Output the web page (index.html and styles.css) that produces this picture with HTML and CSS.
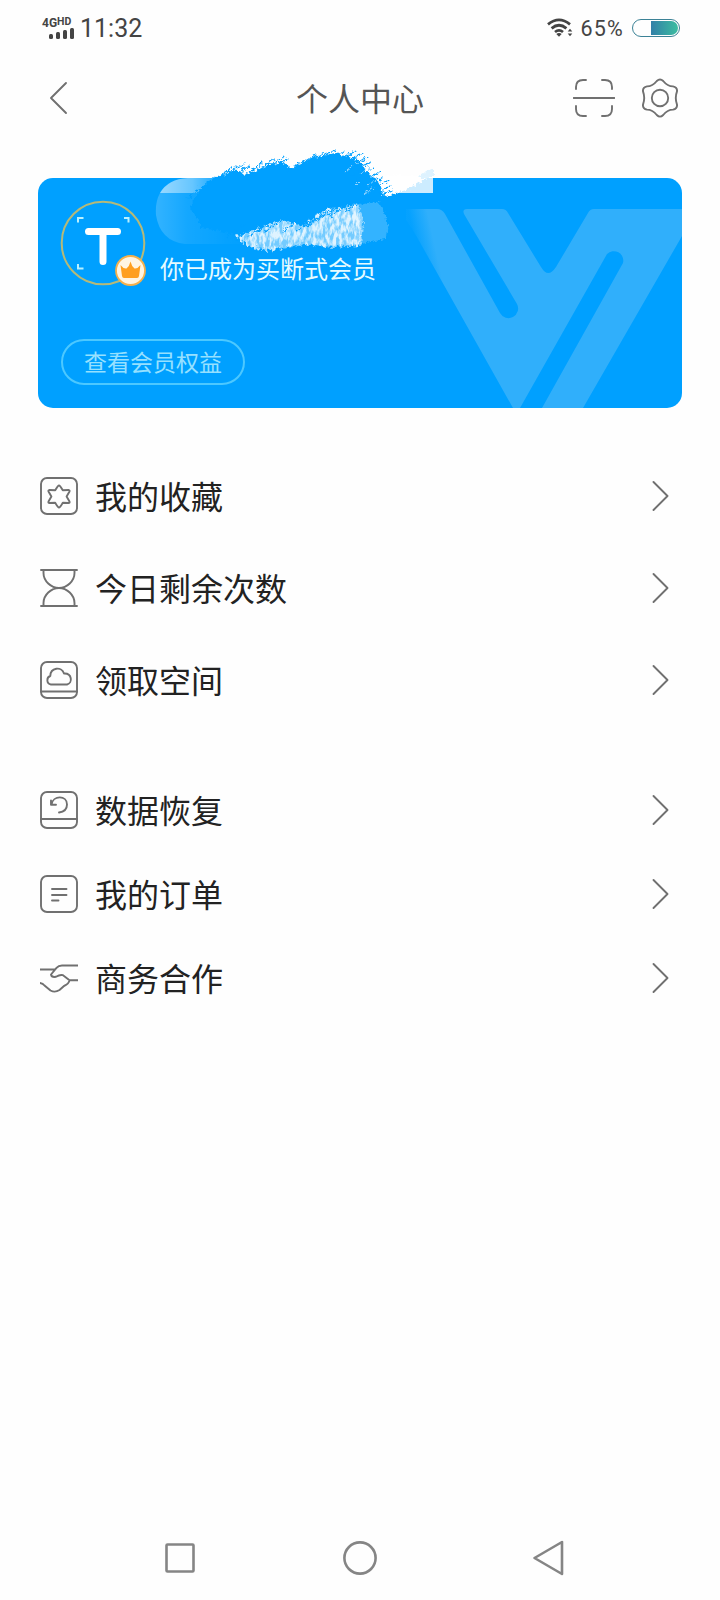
FILE: index.html
```
<!DOCTYPE html>
<html lang="zh-CN">
<head>
    <meta charset="UTF-8">
    <meta name="viewport" content="width=device-width, initial-scale=1.0">
    <title>个人中心</title>
    <link rel="stylesheet" href="styles.css">
</head>
<body>
    <div class="status-bar">
        <div class="status-left">
            <div class="signal">
                <div class="network">4G<span>HD</span></div>
                <div class="bars"><i class="b1"></i><i class="b2"></i><i class="b3"></i><i class="b4"></i></div>
            </div>
            <span class="time">11:32</span>
        </div>
        <div class="status-right">
            <svg class="wifi" width="27" height="20" viewBox="0 0 27 20">
                <g fill="none" stroke="#444" stroke-width="2.8">
                    <path d="M1 6.3Q12 -2.6 23 6.3"/>
                    <path d="M4.6 10.3Q12 4.2 19.4 10.3"/>
                    <path d="M8 14Q12 10.8 16 14"/>
                </g>
                <path d="M9.3 16Q12 14.2 14.7 16L12 18.8Z" fill="#444"/>
                <path d="M20.7 13.6L23 10.8L25.3 13.6ZM20.7 15.4L23 18.2L25.3 15.4Z" fill="#444"/>
            </svg>
            <span class="percent">65%</span>
            <div class="battery"><div class="battery-level"></div></div>
        </div>
    </div>

    <header class="header">
        <div class="header-side">
            <svg width="20" height="34" viewBox="0 0 20 34"><path d="M17 2L2 17L17 32" class="line"/></svg>
        </div>
        <h1>个人中心</h1>
        <div class="header-side right">
            <svg width="42" height="40" viewBox="0 0 42 40">
                <path d="M3 11V9Q3 2 10 2H13M29 2H32Q39 2 39 9V11M3 28V31Q3 38 10 38H13M29 38H32Q39 38 39 31V28M0.5 20H41.5" class="line"/>
            </svg>
            <svg width="38" height="40" viewBox="0 0 38 40">
                <path d="M15.8 3Q19 -0.2 22.2 3C25 6.5 27.5 8.4 32 8.4Q36.5 9.3 36 13.4C34.3 18 34.3 22 36 26.6Q36.5 30.7 32 31.6C27.5 31.6 25 33.5 22.2 37Q19 40.2 15.8 37C13 33.5 10.5 31.6 6 31.6Q1.5 30.7 2 26.6C3.7 22 3.7 18 2 13.4Q1.5 9.3 6 8.4C10.5 8.4 13 6.5 15.8 3Z" class="line"/>
                <circle cx="19" cy="20" r="8.2" class="line"/>
            </svg>
        </div>
    </header>

    <section class="card">
        <svg class="card-logo" width="644" height="230" viewBox="0 0 644 230">
            <defs>
                <linearGradient id="logoFade" gradientUnits="userSpaceOnUse" x1="374" y1="50" x2="392" y2="46">
                    <stop offset="0" stop-color="#30affb" stop-opacity="0.1"/>
                    <stop offset="1" stop-color="#30affb"/>
                </linearGradient>
            </defs>
            <path fill="url(#logoFade)" d="M368 31H399Q404 31 407 36L462 135A9.5 9.5 0 0 0 479 126L426 36Q424 31 429 31H464Q468 31 470 35L503 89Q510 101 518 89L550 35Q552 31 556 31H644V58L545 230H504L585 85A9.5 9.5 0 0 0 569 76L482 230H475L384 68Q374 50 368 42Z"/>
        </svg>

        <div class="member">
            <svg class="avatar" width="86" height="86" viewBox="0 0 86 86">
                <circle cx="43" cy="43" r="41.3" fill="none" stroke="#b5b978" stroke-width="2"/>
                <path d="M18 22.5V18H23.5M64 18H68.5V22.5M18 64V68.5H23.5" fill="none" stroke="#b9f0ff" stroke-width="2"/>
                <path d="M28.5 31.5H57.5M43 31.5V61.5" fill="none" stroke="#fff" stroke-width="7" stroke-linecap="round"/>
                <circle cx="70.5" cy="70.5" r="14.5" fill="#fff5e3" stroke="#f5b04c" stroke-width="1.8"/>
                <path d="M60.5 65Q63.5 69 66.5 68.5Q69.5 66 70.5 61.5Q71.500 66 74.500 68.500Q77.500 69 80.500 65L79 76Q78.700 78 77 78H64Q62.300 78 62 76Z" fill="#ff9f1f"/>
            </svg>
            <p class="member-text">你已成为买断式会员</p>
        </div>
        <a class="benefits">查看会员权益</a>

        <svg class="brush" width="320" height="120" viewBox="0 0 320 120">
            <defs>
                <filter id="rough" x="-10%" y="-20%" width="120%" height="140%">
                    <feTurbulence type="fractalNoise" baseFrequency="0.3" numOctaves="3" seed="4"/>
                    <feDisplacementMap in="SourceGraphic" scale="7" xChannelSelector="R" yChannelSelector="G"/>
                    <feGaussianBlur stdDeviation="0.5"/>
                </filter>
                <filter id="chalk" x="-10%" y="-20%" width="120%" height="140%">
                    <feTurbulence type="fractalNoise" baseFrequency="0.3 0.12" numOctaves="3" seed="9" result="n"/>
                    <feColorMatrix in="n" type="matrix" values="0 0 0 0 1  0 0 0 0 1  0 0 0 0 1  3.5 0 0 0 -1.2" result="holes"/>
                    <feDisplacementMap in="SourceGraphic" in2="n" scale="12" xChannelSelector="R" yChannelSelector="G" result="d"/>
                    <feComposite in="d" in2="holes" operator="in"/>
                    <feGaussianBlur stdDeviation="0.5"/>
                </filter>
                <linearGradient id="leftWhite" x1="0" x2="1" y1="0" y2="0">
                    <stop offset="0" stop-color="#fff" stop-opacity="0.6"/>
                    <stop offset="0.5" stop-color="#fff" stop-opacity="0.4"/>
                    <stop offset="1" stop-color="#fff" stop-opacity="0"/>
                </linearGradient>
                <linearGradient id="pillFade" x1="0" x2="1" y1="0" y2="0">
                    <stop offset="0" stop-color="#fff" stop-opacity="0.2"/>
                    <stop offset="0.3" stop-color="#fff" stop-opacity="0.08"/>
                    <stop offset="0.7" stop-color="#fff" stop-opacity="0.02"/>
                    <stop offset="1" stop-color="#fff" stop-opacity="0"/>
                </linearGradient>
            </defs>
            <path d="M20 53Q28 39 48 38H85V53Z" fill="url(#leftWhite)"/>
            <path d="M20 53H120V104H45Q20 101 16 75Q15 62 20 53Z" fill="url(#pillFade)"/>
            <path d="M234 36L293 36V53H245Z" fill="#fff" opacity="0.8"/>
            <path d="M238 36L291 36L266 50L244 57Z" fill="#fff" filter="url(#rough)"/>
            <path d="M276 38L293 28V38Z" fill="#bfe8ff" opacity="0.5" filter="url(#rough)"/>
            <path d="M210 66L238 62Q252 78 245 99L220 104Z" fill="#fff" opacity="0.2" filter="url(#rough)"/>
            <path d="M96 96L140 80L163 86L184 70L218 65L223 82L221 105L192 107L165 104L128 110L112 107Z" fill="#fff" opacity="0.45" filter="url(#rough)"/>
            <path d="M96 96L140 80L163 86L184 70L218 65L223 82L221 105L192 107L165 104L128 110L112 107Z" fill="#f2fbff" opacity="0.85" filter="url(#chalk)"/>
            <g fill="#00a0ff" filter="url(#rough)">
                <path d="M62 47L74 38L94 30L108 34L126 26L142 22L152 28L174 18L195 13L208 17L218 20L229 34L240 50L226 59L205 63L184 70L163 84L140 80L100 95L62 88L50 67Z"/>
            </g>
            <g stroke="#00a0ff" stroke-width="1.2" stroke-linecap="round" fill="none" filter="url(#rough)">
                <path d="M48 58L68 42M54 60L76 38M60 50L82 34M76 38L96 26M84 36L104 24M94 34L110 26M104 37L122 23M112 34L134 19M122 30L144 17M130 28L148 19M146 32L166 19M154 29L176 15M164 24L186 11M174 21L196 9M184 20L204 12"/>
                <path d="M194 22L214 12M202 24L222 13M206 30L228 17M210 36L231 22M214 42L234 27M218 48L239 32M220 54L243 37M222 58L247 41M226 60L250 46M230 61L252 50M220 65L246 54M206 70L232 57"/>
                <path d="M88 96L108 82M96 99L118 86M110 95L132 82M126 91L148 76M142 92L162 79M156 92L176 78M168 86L186 72M178 80L198 67M190 76L210 62"/>
            </g>
            <path d="M216 24L224 18M220 34L229 26M228 46L237 38M224 55L233 48M206 32L213 26M214 46L220 40" stroke="#8fd3ff" stroke-width="1" fill="none" filter="url(#rough)"/>
        </svg>
    </section>

    <ul class="menu">
        <li>
            <svg class="icon" width="38" height="38" viewBox="0 0 38 38">
                <rect x="1" y="1" width="36" height="36" rx="6" class="line"/>
                <path d="M19 8.5Q20 8.5 22.8 13.3L28.5 13Q30 13.4 29.5 14.5L26.6 19.5L29.5 24.5Q30 26 28.5 26L22.8 25.7Q20 30.5 19 30.5Q18 30.5 15.2 25.7L9.5 26Q8 26 8.5 24.5L11.4 19.5L8.5 14.5Q8 13.4 9.5 13L15.2 13.3Q18 8.5 19 8.5Z" class="line"/>
            </svg>
            <span>我的收藏</span>
            <svg class="arrow" width="18" height="32" viewBox="0 0 18 32"><path d="M1.5 2L15.500 16L1.500 30" class="line"/></svg>
        </li>
        <li>
            <svg class="icon" width="38" height="38" viewBox="0 0 38 38">
                <path d="M1 1H37M1 37H37M3.5 1V4C3.5 12 11 19 19 19S34.5 12 34.5 4V1M3.5 37V34C3.5 26 11 19 19 19S34.5 26 34.5 34V37" class="line"/>
            </svg>
            <span>今日剩余次数</span>
            <svg class="arrow" width="18" height="32" viewBox="0 0 18 32"><path d="M1.500 2L15.500 16L1.500 30" class="line"/></svg>
        </li>
        <li>
            <svg class="icon" width="38" height="38" viewBox="0 0 38 38">
                <rect x="1" y="1" width="36" height="36" rx="6" class="line"/>
                <path d="M1 30.5H37M11 23.5C6 22.5 6.5 16 10.3 15C10.5 6.5 21.5 5 24 12.5C32 12 33 22 27 23.5Z" class="line"/>
            </svg>
            <span>领取空间</span>
            <svg class="arrow" width="18" height="32" viewBox="0 0 18 32"><path d="M1.500 2L15.500 16L1.500 30" class="line"/></svg>
        </li>
    </ul>

    <ul class="menu compact">
        <li>
            <svg class="icon" width="38" height="38" viewBox="0 0 38 38">
                <rect x="1" y="1" width="36" height="36" rx="6" class="line"/>
                <path d="M1 28H37M11.5 13.5C13 4 27 4 27 13.5Q27 20.5 19 21.5M11 9.5V13.7H16" class="line"/>
            </svg>
            <span>数据恢复</span>
            <svg class="arrow" width="18" height="32" viewBox="0 0 18 32"><path d="M1.500 2L15.500 16L1.500 30" class="line"/></svg>
        </li>
        <li>
            <svg class="icon" width="38" height="38" viewBox="0 0 38 38">
                <rect x="1" y="1" width="36" height="36" rx="6" class="line"/>
                <path d="M12 14H26.5M12 20H26.5M12 25.500H18.500" class="line"/>
            </svg>
            <span>我的订单</span>
            <svg class="arrow" width="18" height="32" viewBox="0 0 18 32"><path d="M1.500 2L15.500 16L1.500 30" class="line"/></svg>
        </li>
        <li>
            <svg class="icon" width="38" height="38" viewBox="0 0 38 38">
                <path d="M0 10.5H14.5M38 6.5H22Q18.5 6.5 16.5 8.8L11 15.5Q11.5 18.5 16 17.8Q20 15.3 23 16.2L29.5 21.2H38M29.5 21.2Q29 25 24 27L19.5 31Q15 34 10.5 31.5L4.5 26.5Q3 24.5 0 24" class="line"/>
            </svg>
            <span>商务合作</span>
            <svg class="arrow" width="18" height="32" viewBox="0 0 18 32"><path d="M1.500 2L15.500 16L1.500 30" class="line"/></svg>
        </li>
    </ul>

    <nav class="nav-bar">
        <svg width="36" height="36" viewBox="0 0 36 36"><rect x="4.5" y="4.5" width="27" height="27" rx="1"/></svg>
        <svg width="36" height="36" viewBox="0 0 36 36"><circle cx="18" cy="18" r="15.6"/></svg>
        <svg class="nav-back" width="36" height="36" viewBox="0 0 36 36"><path d="M2.5 18L30 2V34Z"/></svg>
    </nav>
</body>
</html>
```
FILE: styles.css
```
* {
    margin: 0;
    padding: 0;
    box-sizing: border-box;
}

body {
    width: 720px;
    height: 1600px;
    display: flex;
    flex-direction: column;
    background: #fefefe;
    font-family: "Noto Sans CJK SC", sans-serif;
    color: #222;
    overflow: hidden;
}

svg {
    display: block;
    flex-shrink: 0;
}

.line {
    fill: none;
    stroke: #707070;
    stroke-width: 1.9;
    stroke-linecap: round;
    stroke-linejoin: round;
}

.status-bar {
    height: 56px;
    padding: 0 40px 0 42px;
    display: flex;
    justify-content: space-between;
    align-items: center;
    font-family: Roboto, sans-serif;
    color: #444;
}

.status-left,
.status-right {
    display: flex;
    align-items: center;
}

.signal {
    width: 32px;
    margin-right: 6px;
}

.network {
    display: flex;
    height: 11px;
    font-size: 12px;
    font-weight: 700;
    line-height: 12px;
}

.network span {
    font-size: 10.5px;
    line-height: 9px;
}

.bars {
    display: flex;
    align-items: flex-end;
    justify-content: flex-end;
    gap: 3px;
    height: 11px;
}

.bars i {
    width: 4px;
    border-radius: 1.5px;
    background: #444;
}

.b1 { height: 5px; }
.b2 { height: 7px; }
.b3 { height: 9px; }
.b4 { height: 11px; }

.time {
    font-size: 25px;
    line-height: 56px;
    padding-top: 2px;
}

.wifi {
    margin-right: 6px;
}

.percent {
    font-size: 21.5px;
    letter-spacing: 1.2px;
    line-height: 56px;
    margin-right: 8px;
    padding-top: 2px;
}

.battery {
    width: 48px;
    height: 18px;
    padding: 1px;
    display: flex;
    justify-content: flex-end;
    border: 1.5px solid #3c8296;
    border-radius: 9px;
}

.battery-level {
    width: 27px;
    border-radius: 0 7px 7px 0;
    background: linear-gradient(90deg, #3280a8, #3cbda0);
}

.header {
    height: 84px;
    padding: 0 41px 0 49px;
    display: flex;
    align-items: center;
}

.header-side {
    width: 130px;
    display: flex;
    align-items: center;
}

.header-side.right {
    justify-content: flex-end;
    gap: 26px;
}

.header h1 {
    flex: 1;
    margin-left: 8px;
    margin-right: 16px;
    padding-bottom: 2px;
    text-align: center;
    font-size: 32px;
    font-weight: 400;
    line-height: 48px;
    color: #555;
}

.card {
    position: relative;
    height: 230px;
    margin: 38px 38px 0;
    padding: 22px;
    border-radius: 15px;
    background: #00a0ff;
}

.card-logo {
    position: absolute;
    left: 0;
    top: 0;
    border-radius: 15px;
}

.brush {
    position: absolute;
    left: 102px;
    top: -38px;
}

.member {
    position: relative;
    display: flex;
    align-items: flex-end;
    gap: 14px;
}

.member-text {
    font-size: 24px;
    line-height: 36px;
    color: #e6fbff;
}

.benefits {
    position: relative;
    display: flex;
    align-items: center;
    justify-content: center;
    width: 184px;
    height: 46px;
    margin-top: 53px;
    margin-left: 1px;
    padding-bottom: 3px;
    border: 2px solid #4cc8ff;
    border-radius: 23px;
    font-size: 23px;
    line-height: 34px;
    color: #96e0ff;
}

.menu {
    list-style: none;
    margin-top: 42px;
    padding: 0 50px 0 40px;
}

.menu li {
    display: flex;
    align-items: center;
    height: 92px;
}

.menu.compact li {
    height: 84px;
}

.menu span {
    flex: 1;
    margin-left: 17px;
    padding-bottom: 2px;
    font-size: 32px;
    line-height: 48px;
}

.nav-bar {
    height: 84px;
    margin-top: auto;
    padding: 0 90px;
    display: grid;
    grid-template-columns: repeat(3, 1fr);
    align-items: center;
    justify-items: center;
}

.nav-bar svg {
    fill: none;
    stroke: #858585;
    stroke-width: 2.6;
    stroke-linejoin: round;
}

.nav-bar .nav-back {
    margin-left: 20px;
}
```
